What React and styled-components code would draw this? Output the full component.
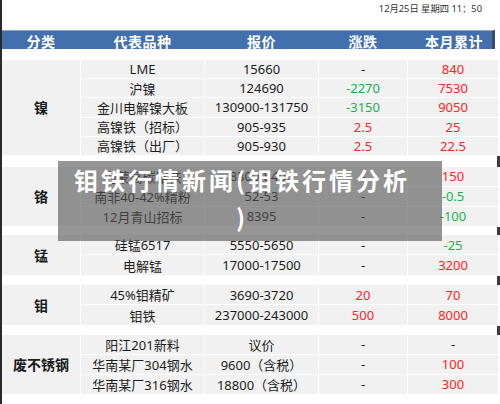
import React from 'react'
import styled, { createGlobalStyle } from 'styled-components'

const GlobalStyle = createGlobalStyle`
  html, body {
    margin: 0;
    padding: 0;
    background: #fff;
  }
  body {
    font-family: "Noto Sans", "Noto Sans CJK SC", sans-serif;
  }
`

const groups = [
  {
    name: '镍',
    rowH: 18.2,
    rows: [
      ['LME', '15660', '-', '840'],
      ['沪镍', '124690', '-2270', '7530'],
      ['金川电解镍大板', '130900-131750', '-3150', '9050'],
      ['高镍铁（招标）', '905-935', '2.5', '25'],
      ['高镍铁（出厂）', '905-930', '2.5', '22.5'],
    ],
    gap: 12,
  },
  {
    name: '铬',
    rowH: 19,
    rows: [
      ['内蒙高碳铬铁', '8300-8400', '-', '150'],
      ['南非40-42%精粉', '52-53', '-', '-0.5'],
      ['12月青山招标', '8395', '-', '-100'],
    ],
    gap: 9,
  },
  {
    name: '锰',
    rowH: 19.5,
    rows: [
      ['硅锰6517', '5550-5650', '-', '-25'],
      ['电解锰', '17000-17500', '-', '3200'],
    ],
    gap: 10,
  },
  {
    name: '钼',
    rowH: 19.5,
    rows: [
      ['45%钼精矿', '3690-3720', '20', '70'],
      ['钼铁', '237000-243000', '500', '8000'],
    ],
    gap: 10,
  },
  {
    name: '废不锈钢',
    rowH: 19,
    rows: [
      ['阳江201新料', '议价', '-', '-'],
      ['华南某厂304钢水', '9600（含税）', '-', '100'],
      ['华南某厂316钢水', '18800（含税）', '-', '300'],
    ],
    gap: 0,
  },
]

const toneOf = (v) => {
  if (v === '-' || v === '议价') return 'plain'
  return v.startsWith('-') ? 'down' : 'up'
}

const App = () => {
  return (
    <Page>
      <GlobalStyle />
      <TopBar>12月25日 星期四 11：50</TopBar>
      <HeaderRow>
        <HeadCell>分类</HeadCell>
        <HeadCell>代表品种</HeadCell>
        <HeadCell>报价</HeadCell>
        <HeadCell>涨跌</HeadCell>
        <HeadCell $shift={8}>本月累计</HeadCell>
      </HeaderRow>
      <Spacer $h={11} />
      {groups.map((g) => (
        <React.Fragment key={g.name}>
          <Group $rowH={g.rowH}>
            <CategoryCell $span={g.rows.length}>{g.name}</CategoryCell>
            {g.rows.map((r) => (
              <React.Fragment key={r[0]}>
                <Cell>{r[0]}</Cell>
                <Cell>{r[1]}</Cell>
                <Cell $tone={toneOf(r[2])}>{r[2]}</Cell>
                <Cell $tone={toneOf(r[3])}>{r[3]}</Cell>
              </React.Fragment>
            ))}
          </Group>
          {g.gap > 0 && <Spacer $h={g.gap} $mark />}
        </React.Fragment>
      ))}
      <NewsOverlay>
        钼铁行情新闻(钼铁行情分析
        <br />)
      </NewsOverlay>
    </Page>
  )
}

export default App

const Page = styled.div`
  position: relative;
  width: 500px;
  height: 404px;
  box-sizing: border-box;
  border-left: 2px solid #2a2a2a;
  overflow: hidden;
  background: #fff;
`

const TopBar = styled.div`
  height: 30px;
  display: flex;
  justify-content: flex-end;
  padding-right: 18px;
  padding-top: 3px;
  box-sizing: border-box;
  font-size: 9.3px;
  line-height: 12px;
  color: #333;
`

const HeaderRow = styled.div`
  display: grid;
  grid-template-columns: 78px 123px 113px 88px 1fr;
  column-gap: 1px;
  width: 493px;
  height: 19px;
  box-sizing: border-box;
  background: #4270ad;
  border-top: 1px solid #8aa9d2;
  border-right: 3px solid #3b4b66;
`

const HeadCell = styled.div`
  display: flex;
  align-items: center;
  justify-content: center;
  padding-left: ${(p) => p.$shift || 0}px;
  color: #fff;
  font-weight: 700;
  font-size: 14px;
  letter-spacing: 0.5px;
`

const Spacer = styled.div`
  position: relative;
  height: ${(p) => p.$h}px;
  &::after {
    content: '';
    display: ${(p) => (p.$mark ? 'block' : 'none')};
    position: absolute;
    right: 0;
    top: 1px;
    bottom: 0;
    width: 3px;
    background: #3a3a3a;
  }
`

const Group = styled.div`
  display: grid;
  grid-template-columns: 78px 123px 113px 88px 90px;
  grid-auto-rows: ${(p) => p.$rowH}px;
  column-gap: 1px;
  row-gap: 1px;
`

const Cell = styled.div`
  display: flex;
  align-items: center;
  justify-content: center;
  background: #f1f1f1;
  font-size: 13px;
  white-space: nowrap;
  color: ${(p) =>
    p.$tone === 'up' ? '#ff2323' : p.$tone === 'down' ? '#1daf4f' : '#1c1c1c'};
`

const CategoryCell = styled(Cell)`
  grid-row: span ${(p) => p.$span};
  font-weight: 700;
  font-size: 14px;
  color: #1a1a1a;
`

const NewsOverlay = styled.div`
  position: absolute;
  left: 56px;
  top: 161px;
  width: 384px;
  height: 80px;
  box-sizing: border-box;
  padding: 0 24px 0 8px;
  background: rgba(85, 85, 85, 0.62);
  color: #fff;
  font-family: "Noto Sans CJK SC", sans-serif;
  font-weight: 700;
  font-size: 24px;
  letter-spacing: 3px;
  line-height: 37px;
  text-align: center;
  white-space: nowrap;
`
